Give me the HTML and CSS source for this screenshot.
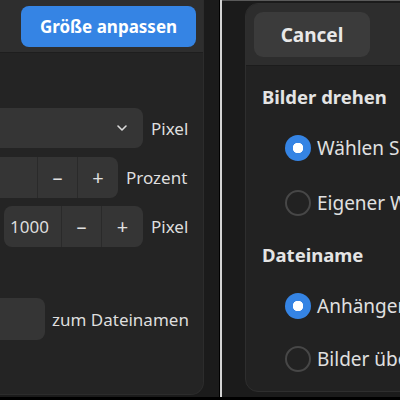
FILE: index.html
```html
<!DOCTYPE html>
<html>
<head>
<meta charset="utf-8">
<link rel="stylesheet" href="styles.css">
</head>
<body>
<div class="screen">
  <div class="left">
    <div class="dlg">
      <div class="hdr"><button class="btn-blue">Größe anpassen</button></div>
      <div class="body">
        <div class="row r1">
          <div class="combo"><svg class="chev" width="14" height="14" viewBox="0 0 14 14"><path d="M3 5l4 4 4-4" fill="none" stroke="#dcdcdc" stroke-width="1.6" stroke-linecap="round" stroke-linejoin="round"/></svg></div>
          <span class="lbl">Pixel</span>
        </div>
        <div class="row r2">
          <div class="spin"><div class="sv sv2"></div><div class="sb">–</div><div class="sb">+</div></div>
          <span class="lbl">Prozent</span>
        </div>
        <div class="row r3">
          <div class="spin"><div class="sv sv3">1000</div><div class="sb">–</div><div class="sb sb-last">+</div></div>
          <span class="lbl">Pixel</span>
        </div>
        <div class="row r4">
          <div class="entry"></div>
          <span class="lbl lbl4">zum Dateinamen</span>
        </div>
      </div>
    </div>
  </div>
  <div class="divider"></div>
  <div class="right">
    <div class="dlg2">
      <div class="hdr2"><button class="btn-cancel">Cancel</button></div>
      <div class="body2">
        <div class="title">Bilder drehen</div>
        <div class="radio ra"><span class="dot on"></span><span>Wählen Sie einen Winkel</span></div>
        <div class="radio rb"><span class="dot"></span><span>Eigener Winkel</span></div>
        <div class="title t2">Dateiname</div>
        <div class="radio rc"><span class="dot on"></span><span>Anhängen an Dateinamen</span></div>
        <div class="radio rd"><span class="dot"></span><span>Bilder überschreiben</span></div>
      </div>
    </div>
  </div>
</div>
</body>
</html>
```

FILE: styles.css
```css
* { box-sizing: border-box; }
html, body { margin: 0; padding: 0; }
body {
  width: 400px;
  height: 400px;
  overflow: hidden;
  background: #000;
  font-family: "Noto Sans", "Open Sans", sans-serif;
  color: #dedede;
}
.screen {
  display: flex;
  height: 397px;
  background: #1b1b1b;
}
.left {
  width: 219px;
  flex: none;
  overflow: hidden;
  background: #1b1b1b;
}
.dlg {
  width: 204px;
  height: 395px;
  background: #242424;
  border-radius: 0 0 13px 0;
  border-right: 1px solid #2c2c2c;
  border-bottom: 1px solid #2c2c2c;
  overflow: hidden;
  display: flex;
  flex-direction: column;
}
.hdr {
  height: 53px;
  flex: none;
  background: #2e2e2e;
  border-bottom: 1px solid #1e1e1e;
  padding: 6px 0 0 21px;
}
.btn-blue {
  width: 175px;
  height: 41px;
  border: none;
  border-radius: 8px;
  background: #3584e4;
  color: #fff;
  font-family: inherit;
  font-size: 17px;
  font-weight: 700;
  padding: 0;
}
.body {
  padding-top: 55px;
  display: flex;
  flex-direction: column;
}
.row {
  display: flex;
  align-items: center;
  gap: 8px;
  height: 41px;
  flex: none;
  white-space: nowrap;
}
.lbl { font-size: 17px; color: #dedede; }
.r1 { margin-left: -17px; height: 40px; }
.r2 { margin-left: -22px; margin-top: 9px; }
.r3 { margin-left: 4px; margin-top: 8px; }
.r4 { margin-left: -25px; margin-top: 51px; height: 42px; gap: 7px; }
.combo {
  width: 160px;
  height: 100%;
  background: #353535;
  border-radius: 8px;
  display: flex;
  align-items: center;
  justify-content: flex-end;
  padding-right: 14px;
}
.spin {
  display: flex;
  height: 100%;
  background: #353535;
  border-radius: 8px;
}
.sv { height: 100%; border-right: 1px solid #2a2a2a; display: flex; align-items: center; font-size: 17px; }
.sv2 { width: 60px; }
.sv3 { width: 58px; padding-left: 6px; }
.sb {
  width: 40px;
  height: 100%;
  display: flex;
  align-items: center;
  justify-content: center;
  font-size: 20px;
  border-right: 1px solid #2a2a2a;
  color: #e0e0e0;
}
.sb:last-child { border-right: none; }
.sb-last { width: 41px; }
.entry {
  width: 70px;
  height: 100%;
  background: #353535;
  border-radius: 8px;
}
.divider {
  width: 3px;
  flex: none;
  background: #d4d4d4;
  border-left: 1px solid #000;
}
.right {
  flex: 1;
  overflow: hidden;
  background: #1b1b1b;
  border-top: 1px solid #5a5a5a;
  padding: 2px 0 0 23px;
}
.dlg2 {
  width: 300px;
  height: 389px;
  background: #222;
  border-radius: 13px;
  border: 1px solid #2e2e2e;
  overflow: hidden;
}
.hdr2 {
  height: 62px;
  background: #2d2d2d;
  border-bottom: 1px solid #1c1c1c;
  padding: 8px 0 0 8px;
}
.btn-cancel {
  width: 116px;
  height: 45px;
  border: none;
  border-radius: 9px;
  background: #3b3b3b;
  color: #e8e8e8;
  font-family: inherit;
  font-size: 19px;
  font-weight: 700;
  padding: 0;
}
.body2 {
  padding: 17px 0 0 16px;
  white-space: nowrap;
}
.title {
  font-size: 18.5px;
  font-weight: 700;
  color: #e4e4e4;
  height: 28px;
  line-height: 28px;
}
.t2 { margin-top: 23px; }
.radio {
  display: flex;
  align-items: center;
  gap: 6px;
  height: 30px;
  margin-left: 23px;
  font-size: 19px;
  color: #e0e0e0;
}
.ra { margin-top: 22px; }
.rb { margin-top: 25px; }
.rc { margin-top: 22px; }
.rd { margin-top: 23px; }
.dot {
  width: 26px;
  height: 26px;
  flex: none;
  border-radius: 50%;
  border: 2px solid #474747;
}
.dot.on {
  border: none;
  background: radial-gradient(circle, #fff 0 5px, #3584e4 5.5px);
}
```
